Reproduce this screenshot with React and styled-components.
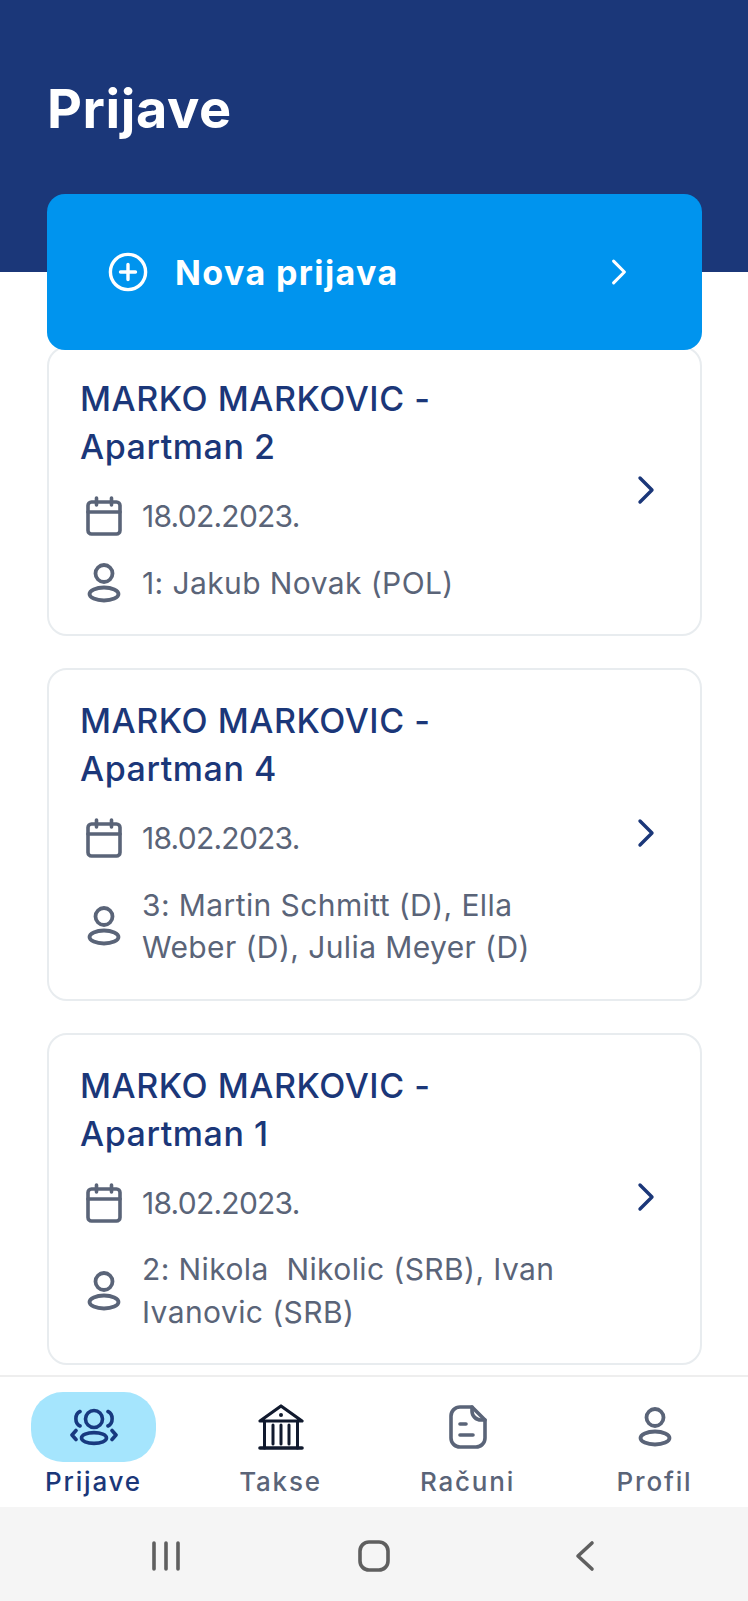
import React from 'react';
import styled, { createGlobalStyle } from 'styled-components';

const colors = {
  navy: '#1b3779',
  blue: '#0094ee',
  gray: '#5a6478',
  border: '#e8ecef',
  pill: '#a5e5fd',
  ink: '#111a2e',
  systemBar: '#f5f5f5',
  systemIcon: '#5f5f5f',
};

const GlobalStyle = createGlobalStyle`
  html, body {
    margin: 0;
    padding: 0;
    background: #fff;
  }

  * {
    box-sizing: border-box;
  }
`;

const Page = styled.div`
  display: flex;
  flex-direction: column;
  width: 748px;
  height: 1601px;
  overflow: hidden;
  font-family: Inter, 'Liberation Sans', sans-serif;
`;

const Header = styled.header`
  background: ${colors.navy};
  height: 272px;
  padding: 73px 47px 0;
  flex-shrink: 0;
`;

const PageTitle = styled.h1`
  color: #fff;
  font-size: 54px;
  font-weight: 700;
  letter-spacing: 0.6px;
  line-height: 72px;
  margin: 0;
`;

const Content = styled.main`
  flex: 1;
  padding: 0 46px 0 47px;
  display: flex;
  flex-direction: column;
  min-height: 0;
`;

const NewButton = styled.a`
  align-items: center;
  background: ${colors.blue};
  border-radius: 18px;
  color: #fff;
  display: flex;
  flex-shrink: 0;
  height: 156px;
  margin: -78px 0 -4px;
  padding: 0 74px 0 61px;
  position: relative;
  z-index: 1;
`;

const NewLabel = styled.span`
  flex: 1;
  font-size: 34px;
  font-weight: 700;
  letter-spacing: 1.4px;
  margin-left: 27px;
`;

const Card = styled.article`
  align-items: center;
  background: #fff;
  border: 2px solid ${colors.border};
  border-radius: 20px;
  display: flex;
  flex-shrink: 0;
  margin-bottom: 32px;
  padding: 27px 44px 30px 31px;
`;

const CardBody = styled.div`
  flex: 1;
  min-width: 0;
`;

const CardTitle = styled.h2`
  color: ${colors.navy};
  font-size: 34px;
  font-weight: 500;
  letter-spacing: 0.55px;
  line-height: 48px;
  margin: 0 0 24px;
  max-width: 400px;
`;

const InfoRow = styled.div`
  align-items: center;
  color: ${colors.gray};
  display: flex;
  font-size: 30px;
  gap: 19px;
  line-height: 42.5px;

  & + & {
    margin-top: 24px;
  }
`;

const InfoIcon = styled.span`
  display: flex;
  flex-shrink: 0;
  justify-content: center;
  margin-left: 5px;
  width: 38px;
`;

const InfoText = styled.span`
  letter-spacing: ${p => p.$spacing}px;
  max-width: 425px;
  white-space: pre-wrap;
`;

const Nav = styled.nav`
  background: #fff;
  border-top: 2px solid #eeeeee;
  display: grid;
  flex-shrink: 0;
  grid-template-columns: repeat(4, 1fr);
  height: 132px;
  padding-top: 15px;
`;

const NavItem = styled.a`
  align-items: center;
  color: ${p => (p.$active ? colors.navy : colors.gray)};
  display: flex;
  flex-direction: column;
  font-size: 26px;
  font-weight: 500;
  letter-spacing: 1.8px;
  line-height: 36px;
`;

const NavIcon = styled.span`
  align-items: center;
  background: ${p => (p.$active ? colors.pill : 'transparent')};
  border-radius: 32px;
  display: flex;
  height: 70px;
  justify-content: center;
  margin-bottom: 2px;
  width: 125px;
`;

const SystemBar = styled.div`
  align-items: center;
  background: ${colors.systemBar};
  display: grid;
  flex: 0 0 94px;
  grid-template-columns: repeat(3, 1fr);
  justify-items: center;
  padding: 3px 62px 0;
`;

const BackIcon = styled.svg`
  margin-left: 6px;
`;

const Chevron = ({ color, w = 20, h = 30, sw = 3.4 }) => (
  <svg width={w} height={h} viewBox="0 0 20 30" fill="none">
    <path d="M4 3l12 12L4 27" stroke={color} strokeWidth={sw} strokeLinecap="round" strokeLinejoin="round" />
  </svg>
);

const PlusCircle = () => (
  <svg width="40" height="40" viewBox="0 0 40 40" fill="none" stroke="#fff" strokeWidth="3.4" strokeLinecap="round">
    <circle cx="20" cy="20" r="17.6" />
    <path d="M20 12.5v15M12.5 20h15" />
  </svg>
);

const CalendarIcon = () => (
  <svg width="36" height="40" viewBox="0 0 36 40" fill="none" stroke={colors.gray} strokeWidth="3.6" strokeLinecap="round" strokeLinejoin="round">
    <rect x="2" y="6" width="32" height="32" rx="3.5" />
    <path d="M2 16h32M10.5 2v7M25.5 2v7" />
  </svg>
);

const UserIcon = ({ color = colors.gray }) => (
  <svg width="34" height="40" viewBox="0 0 34 40" fill="none" stroke={color} strokeWidth="3.8">
    <circle cx="17" cy="10.5" r="8.5" />
    <ellipse cx="17" cy="31" rx="14.5" ry="6.5" />
  </svg>
);

const PeopleIcon = () => (
  <svg width="48" height="38" viewBox="0 0 48 38" fill="none" stroke="#17397f" strokeWidth="3.6" strokeLinecap="round" strokeLinejoin="round">
    <circle cx="24" cy="11" r="8.5" />
    <ellipse cx="24" cy="30" rx="12.5" ry="5.4" />
    <path d="M10 3.5C4.5 6 4.5 15.5 10 18M38 3.5c5.500 2.500 5.500 12 0 14.500M6 22.500L2 27l4 4.500M42 22.500L46 27l-4 4.500" />
  </svg>
);

const BankIcon = () => (
  <svg width="46" height="46" viewBox="0 0 46 46" fill="none" stroke={colors.ink} strokeLinecap="round" strokeLinejoin="round">
    <path d="M2 17L23 2l21 15z" strokeWidth="3.2" />
    <path d="M6.500 18v26M39.500 18v26M15 21v19M23 21v19M31 21v19" strokeWidth="3" />
    <path d="M2 44h42" strokeWidth="3.6" />
    <circle cx="23" cy="11" r="2" fill={colors.ink} stroke="none" />
  </svg>
);

const ReceiptIcon = () => (
  <svg width="38" height="44" viewBox="0 0 38 44" fill="none" stroke={colors.gray} strokeWidth="3.6" strokeLinecap="round" strokeLinejoin="round">
    <path d="M23 2H11a9 9 0 0 0-9 9v22a9 9 0 0 0 9 9h16a9 9 0 0 0 9-9V15z" />
    <path d="M23 2v4a9 9 0 0 0 9 9h4M11 19h6M11 30h13" />
  </svg>
);

const cards = [
  { title: 'MARKO MARKOVIC - Apartman 2', guests: '1: Jakub Novak (POL)' },
  { title: 'MARKO MARKOVIC - Apartman 4', guests: '3: Martin Schmitt (D), Ella Weber (D), Julia Meyer (D)' },
  { title: 'MARKO MARKOVIC - Apartman 1', guests: '2: Nikola  Nikolic (SRB), Ivan Ivanovic (SRB)' },
];

const navItems = [
  { label: 'Prijave', icon: <PeopleIcon />, active: true },
  { label: 'Takse', icon: <BankIcon /> },
  { label: 'Računi', icon: <ReceiptIcon /> },
  { label: 'Profil', icon: <UserIcon /> },
];

const App = () => (
  <Page>
    <GlobalStyle />
    <Header>
      <PageTitle>Prijave</PageTitle>
    </Header>
    <Content>
      <NewButton>
        <PlusCircle />
        <NewLabel>Nova prijava</NewLabel>
        <Chevron color="#fff" w={18} h={30} />
      </NewButton>
      {cards.map(card => (
        <Card key={card.title}>
          <CardBody>
            <CardTitle>{card.title}</CardTitle>
            <InfoRow>
              <InfoIcon><CalendarIcon /></InfoIcon>
              <InfoText $spacing={-0.75}>18.02.2023.</InfoText>
            </InfoRow>
            <InfoRow>
              <InfoIcon><UserIcon /></InfoIcon>
              <InfoText $spacing={0.4}>{card.guests}</InfoText>
            </InfoRow>
          </CardBody>
          <Chevron color={colors.navy} />
        </Card>
      ))}
    </Content>
    <Nav>
      {navItems.map(item => (
        <NavItem key={item.label} $active={item.active}>
          <NavIcon $active={item.active}>{item.icon}</NavIcon>
          {item.label}
        </NavItem>
      ))}
    </Nav>
    <SystemBar>
      <svg width="30" height="32" viewBox="0 0 30 32" stroke={colors.systemIcon} strokeWidth="3.6" strokeLinecap="round">
        <path d="M3 3v26M15 3v26M27 3v26" />
      </svg>
      <svg width="32" height="32" viewBox="0 0 32 32" fill="none" stroke={colors.systemIcon} strokeWidth="3.6">
        <rect x="2" y="2" width="28" height="28" rx="9" />
      </svg>
      <BackIcon width="22" height="32" viewBox="0 0 22 32" fill="none" stroke={colors.systemIcon} strokeWidth="3.6" strokeLinecap="round" strokeLinejoin="round">
        <path d="M18 3L4 16l14 13" />
      </BackIcon>
    </SystemBar>
  </Page>
);

export default App;
